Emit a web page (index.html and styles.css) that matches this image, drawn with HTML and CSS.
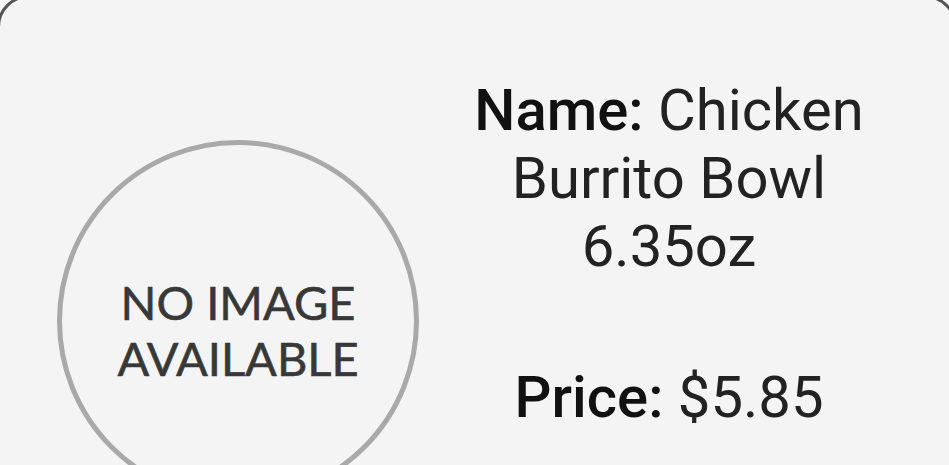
FILE: index.html
```html
<!DOCTYPE html>
<html lang="en">
<head>
    <meta charset="UTF-8">
    <meta name="viewport" content="width=device-width, initial-scale=1.0">
    <title>Product</title>
    <link rel="stylesheet" href="styles.css">
</head>
<body>

    <div class="card">
        <div class="photo">
            <div class="no-image">
                <span>NO IMAGE<br>AVAILABLE</span>
            </div>
        </div>

        <div class="info">
            <p class="name"><b>Name:</b> Chicken Burrito Bowl 6.35oz</p>
            <p class="price"><b>Price:</b> $5.85</p>
        </div>
    </div>

</body>
</html>
```

FILE: styles.css
```css
/* Reset some default styles */
* {
    margin: 0;
    padding: 0;
    box-sizing: border-box;
}

html, body {
    height: 100%;
}

body {
    background-color: #f6f6f6;
    font-family: 'Roboto', 'Liberation Sans', sans-serif;
    overflow: hidden;
}

.card {
    display: flex;
    margin: -5px -8px 0 -3px;
    height: 600px;
    background-color: #f4f4f4;
    border: 3px solid #555;
    border-radius: 32px;
}

/* Placeholder circle */
.photo {
    padding: 142px 0 0 57px;
}

.no-image {
    display: flex;
    align-items: center;
    justify-content: center;
    width: 362px;
    height: 362px;
    border: 5px solid #a9a9a9;
    border-radius: 50%;
    text-align: center;
}

.no-image span {
    font-family: 'Lato', sans-serif;
    font-size: 47px;
    line-height: 56px;
    color: #383838;
    margin-top: 18px;
    -webkit-text-stroke: 0.6px #383838;
}

/* Product details */
.info {
    width: 460px;
    margin-left: 20px;
    padding-top: 78px;
    text-align: center;
    color: #222;
    font-size: 58px;
    line-height: 68px;
}

.info b {
    font-weight: 500;
    color: #111;
}

.price {
    margin-top: 83px;
}
```
